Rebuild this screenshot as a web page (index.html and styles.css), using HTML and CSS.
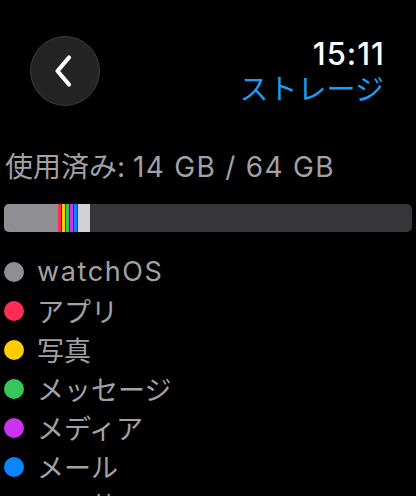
FILE: index.html
```html
<!DOCTYPE html>
<html lang="ja">
<head>
<meta charset="utf-8">
<link rel="stylesheet" href="styles.css">
</head>
<body>
<div class="screen">
  <header class="top">
    <button class="back" aria-label="戻る">
      <svg width="26" height="34" viewBox="0 0 26 34"><path d="M19 3.5 L7.5 17 L19 30.5" fill="none" stroke="#fff" stroke-width="4.2" stroke-linecap="round" stroke-linejoin="round"/></svg>
    </button>
    <div class="titles">
      <div class="time">15:11</div>
      <div class="title">ストレージ</div>
    </div>
  </header>
  <div class="used">使用済み: <span class="lat">14 GB / 64 GB</span></div>
  <div class="bar">
    <span class="seg os"></span>
    <span class="seg s app"></span>
    <span class="seg s photo"></span>
    <span class="seg s msg"></span>
    <span class="seg s media"></span>
    <span class="seg s mail"></span>
    <span class="seg other"></span>
  </div>
  <ul class="legend">
    <li><span class="dot os"></span><span class="lat">watchOS</span></li>
    <li><span class="dot app"></span>アプリ</li>
    <li><span class="dot photo"></span>写真</li>
    <li><span class="dot msg"></span>メッセージ</li>
    <li><span class="dot media"></span>メディア</li>
    <li><span class="dot mail"></span>メール</li>
    <li><span class="dot other"></span>その他</li>
  </ul>
</div>
</body>
</html>
```
FILE: styles.css
```css
html, body {
  margin: 0;
  padding: 0;
  background: #000;
  overflow: hidden;
}
.screen {
  width: 416px;
  height: 496px;
  font-family: Inter, "Noto Sans CJK JP", sans-serif;
  color: #a1a1a6;
  overflow: hidden;
}
.top {
  display: flex;
  justify-content: space-between;
  align-items: flex-start;
  padding: 36px 32px 0 30px;
}
.back {
  width: 70px;
  height: 70px;
  border-radius: 50%;
  background: #242424;
  border: 1.5px solid #3c3c3c;
  box-sizing: border-box;
  display: flex;
  align-items: center;
  justify-content: center;
  padding: 0;
  margin: 0;
}
.back svg { margin-left: -4px; }
.titles {
  display: flex;
  flex-direction: column;
  align-items: flex-end;
}
.time {
  color: #fff;
  font-size: 31px;
  font-weight: 500;
  line-height: 36px;
  letter-spacing: 1px;
  margin-right: -1px;
}
.title {
  color: #1c9cf2;
  font-size: 29px;
  line-height: 34px;
  margin-top: 1px;
}
.used {
  margin-top: 42px;
  padding-left: 5px;
  font-size: 28px;
  line-height: 36px;
}
.used .lat {
  letter-spacing: 1.3px;
}
.bar {
  margin: 19px 4px 0 4px;
  height: 28px;
  border-radius: 5px;
  background: #363638;
  display: flex;
  overflow: hidden;
}
.seg { height: 100%; }
.seg.os { width: 54px; background: #8e8e93; }
.seg.s { width: 3px; margin-left: 1px; }
.seg.app { margin-left: 0; }
.seg.other { width: 12px; margin-left: 1px; background: #d1d1d6; }
.os { background: #8e8e93; }
.app { background: #ff2d55; }
.photo { background: #ffcc00; }
.msg { background: #34c759; }
.media { background: #cc33ee; }
.mail { background: #0a84ff; }
.other { background: #d1d1d6; }
.legend {
  list-style: none;
  margin: 20px 0 0 0;
  padding: 0 0 0 4px;
}
.legend li {
  display: flex;
  align-items: center;
  height: 39px;
  font-size: 27px;
}
.legend .lat {
  letter-spacing: 1.6px;
}
.dot {
  width: 20px;
  height: 20px;
  border-radius: 50%;
  margin-right: 13px;
  flex: none;
}
```
